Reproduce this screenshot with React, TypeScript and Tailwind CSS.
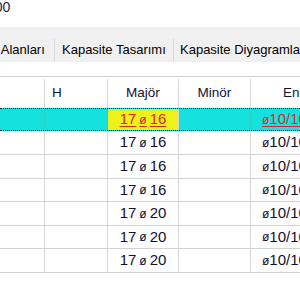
const rows = [
  { a: "17", b: "16", selected: true },
  { a: "17", b: "16", h: "h-[24px]" },
  { a: "17", b: "16", h: "h-[24px]" },
  { a: "17", b: "16", h: "h-[23px]" },
  { a: "17", b: "20", h: "h-[24px]" },
  { a: "17", b: "20", h: "h-[23px]" },
  { a: "17", b: "20", h: "h-[24px]" },
];

const Dia = () => <span className="text-[12px] mx-[3px]">ø</span>;

const App = () => {
  return (
    <div className="w-[300px] h-[300px] overflow-hidden bg-white font-['Liberation_Sans',Arial,sans-serif] text-black">
      {/* value clipped at the top */}
      <div className="h-[27px] flex items-start">
        <span className="-ml-[13px] mt-[-1px] text-[14px] leading-[16px] text-[#1b2550] whitespace-nowrap">100</span>
      </div>

      {/* tab strip */}
      <div className="h-[35px] bg-[#f0f0f0] pt-[12px] flex whitespace-nowrap text-[13px] overflow-hidden">
        <div className="h-[22px] shrink-0 -ml-[10px] w-[65px] border-r border-[#d8d8d8] flex items-center overflow-hidden">
          <span className="text-[#1a5fb4]">n</span>
          <span className="ml-[3.5px]">Alanları</span>
        </div>
        <div className="h-[22px] shrink-0 w-[119px] border-r border-[#d8d8d8] flex items-center pl-[7px]">
          Kapasite Tasarımı
        </div>
        <div className="h-[22px] shrink-0 flex items-center pl-[6px] pr-[8px] border-r border-[#d8d8d8]">
          Kapasite Diyagramları
        </div>
      </div>

      {/* grid */}
      <div className="mt-[14px] border-t border-[#d2d2d2] text-[13.5px] text-[#111133]">
        <div className="h-[31px] flex">
          <div className="w-[45px] shrink-0 border-r border-[#d6d6d6] mt-[2px]" />
          <div className="w-[63px] shrink-0 border-r border-[#d6d6d6] mt-[2px] flex items-center pl-[7px]">H</div>
          <div className="w-[71px] shrink-0 border-r border-[#d6d6d6] mt-[2px] flex items-center justify-center">Majör</div>
          <div className="w-[72px] shrink-0 border-r border-[#d6d6d6] mt-[2px] flex items-center justify-center">Minör</div>
          <div className="flex-1 min-w-0 mt-[2px] flex items-center pl-[32px] whitespace-nowrap overflow-hidden">Enine</div>
        </div>

        {rows.map((r, i) =>
          r.selected ? (
            <div key={i} className="h-[23px] flex border-y border-dotted border-black bg-[#15e2de] text-[15px]">
              <div className="w-[45px] shrink-0 border-r border-[#2fcfcc]" />
              <div className="w-[63px] shrink-0 border-r border-[#2fcfcc]" />
              <div className="w-[71px] shrink-0 border-r border-[#d6d6d6] bg-[#eef21c] flex items-center justify-center text-[#e8231d] underline underline-offset-2">
                {r.a}
                <Dia />
                {r.b}
              </div>
              <div className="w-[72px] shrink-0 border-r border-[#2fcfcc]" />
              <div className="flex-1 min-w-0 overflow-hidden flex items-center pl-[11px] whitespace-nowrap text-[#e8231d] underline underline-offset-2">
                <span className="text-[12px]">ø</span>10/10 cm
              </div>
            </div>
          ) : (
            <div key={i} className={`${r.h} flex border-b border-[#d2d2d2] text-[15px]`}>
              <div className="w-[45px] shrink-0 border-r border-[#d6d6d6]" />
              <div className="w-[63px] shrink-0 border-r border-[#d6d6d6]" />
              <div className="w-[71px] shrink-0 border-r border-[#d6d6d6] flex items-center justify-center">
                {r.a}
                <Dia />
                {r.b}
              </div>
              <div className="w-[72px] shrink-0 border-r border-[#d6d6d6]" />
              <div className="flex-1 min-w-0 overflow-hidden flex items-center pl-[11px] whitespace-nowrap">
                <span className="text-[12px]">ø</span>10/10 cm
              </div>
            </div>
          )
        )}
      </div>
    </div>
  );
};

export default App;
